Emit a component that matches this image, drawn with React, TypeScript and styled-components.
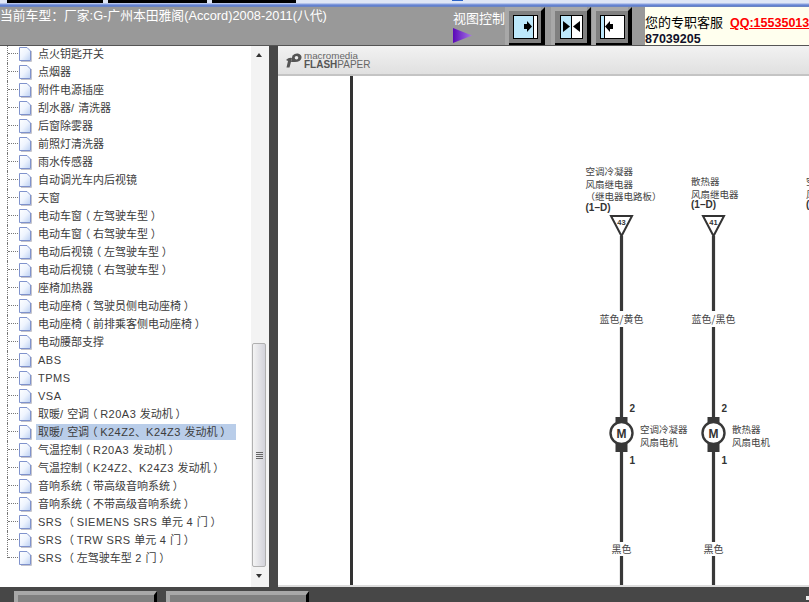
import styled, { createGlobalStyle } from "styled-components";

const GlobalStyle = createGlobalStyle`
  html, body {
    margin: 0;
    padding: 0;
    overflow: hidden;
  }
  body {
    font-family: "Liberation Sans", "Noto Sans CJK SC", sans-serif;
  }
`;

const Page = styled.div`
  width: 809px;
  height: 602px;
  display: flex;
  flex-direction: column;
  background: #474747;
  overflow: hidden;
`;

const TopStrip = styled.div`
  height: 7px;
  flex: none;
  display: flex;
  align-items: flex-start;
  padding-left: 7px;
  background: linear-gradient(#dfe6f6 0 3px, #8ea4e0 4px, #5577cc 6px, #7f8fb8 7px);
`;

const TopSegment = styled.div<{ $w: number }>`
  width: ${(p) => p.$w}px;
  height: 3px;
  margin-right: 5px;
  background: #000;
  flex: none;
`;

const TopTab = styled.div`
  width: 11px;
  height: 1px;
  margin-left: 151px;
  background: #2a62c8;
  flex: none;
`;

const Header = styled.div`
  height: 39px;
  flex: none;
  display: flex;
  background: #999;
  border-bottom: 1px solid #555;
  box-sizing: border-box;
`;

const CarTitle = styled.div`
  width: 453px;
  flex: none;
  padding-top: 1px;
  font-size: 12.8px;
  line-height: 16px;
  color: #fff;
  white-space: nowrap;
`;

const ViewControl = styled.div`
  width: 52px;
  flex: none;
  display: flex;
  flex-direction: column;
  font-size: 13px;
  line-height: 16px;
  color: #fff;
  padding-top: 4px;
  white-space: nowrap;
`;

const Arrow = styled.svg`
  margin-top: 1px;
  width: 19px;
  height: 15px;
`;

const ViewButtons = styled.div`
  width: 140px;
  flex: none;
  display: flex;
`;

const ViewButton = styled.div<{ $after: number }>`
  width: 40px;
  height: 38px;
  flex: none;
  margin-right: ${(p) => p.$after}px;
`;

const Service = styled.div`
  flex: 1;
  background: #ffffee;
  color: #000;
  font-size: 13px;
  line-height: 16px;
  padding-top: 8px;
  white-space: nowrap;
  overflow: hidden;
`;

const QQ = styled.span`
  margin-left: 7px;
  font-size: 12.5px;
  color: #f00;
  font-weight: bold;
  text-decoration: underline;
`;

const Phone = styled.div`
  font-size: 12.5px;
  line-height: 11px;
  font-weight: bold;
  color: #10102a;
  margin-top: 3px;
`;

const Body = styled.div`
  flex: 1;
  display: flex;
  min-height: 0;
`;

const Sidebar = styled.div`
  width: 269px;
  height: 541px;
  flex: none;
  display: flex;
  background: #fff;
  overflow: hidden;
`;

const Tree = styled.div`
  width: 251px;
  flex: none;
  overflow: hidden;
`;

const TreeList = styled.div`
  margin-top: -1px;
`;

const TreeRow = styled.div`
  height: 18px;
  display: flex;
  align-items: center;
  padding-left: 7px;
`;

const TreeGuide = styled.div<{ $last: boolean }>`
  width: 11px;
  height: ${(p) => (p.$last ? "9px" : "18px")};
  align-self: flex-start;
  border-left: 1px dotted #777;
  position: relative;
  flex: none;
  &::after {
    content: "";
    position: absolute;
    left: 0;
    top: 8px;
    width: 10px;
    border-top: 1px dotted #777;
  }
`;

const DocIcon = styled.svg`
  width: 13px;
  height: 15px;
  flex: none;
`;

const TreeLabel = styled.span<{ $active: boolean }>`
  margin-left: 4px;
  padding: 0 7px 0 2px;
  height: 16px;
  line-height: 16px;
  font-size: 11px;
  white-space: pre;
  color: #3c3c3c;
  background: ${(p) => (p.$active ? "#b9cde9" : "transparent")};
`;

const Latin = styled.span`
  letter-spacing: 0.5px;
`;

// fullwidth bracket set in the middle of its cell
const Bracket = styled.span`
  display: inline-block;
  width: 11px;
  text-align: center;
  font-feature-settings: "halt";
`;

const ScrollTrack = styled.div`
  width: 18px;
  flex: none;
  background: #f3f3f3;
  display: flex;
  flex-direction: column;
`;

const ScrollArrow = styled.div<{ $up: boolean }>`
  height: 18px;
  flex: none;
  display: flex;
  align-items: center;
  justify-content: center;
  padding-right: 2px;
  &::before {
    content: "";
    border-left: 3px solid transparent;
    border-right: 3px solid transparent;
    ${(p) =>
      p.$up ? "border-bottom: 4px solid #333;" : "border-top: 4px solid #333;"}
  }
`;

const ScrollSpace = styled.div`
  height: 279px;
  flex: none;
`;

const ScrollThumb = styled.div`
  height: 224px;
  flex: none;
  margin-left: 1px;
  width: 14px;
  box-sizing: border-box;
  border: 1px solid #b0b0b0;
  border-radius: 2px;
  background: linear-gradient(to right, #f4f4f4, #d2d2da);
  display: flex;
  align-items: center;
  justify-content: center;
`;

const Grip = styled.div`
  width: 7px;
  height: 7px;
  background: repeating-linear-gradient(#666 0 1px, transparent 1px 2px);
`;

const Divider = styled.div`
  width: 9px;
  flex: none;
`;

const Viewer = styled.div`
  width: 531px;
  height: 541px;
  flex: none;
  display: flex;
  flex-direction: column;
  background: #fff;
  border-bottom: 2px solid #ddd;
  box-sizing: border-box;
`;

const ViewerBar = styled.div`
  height: 30px;
  flex: none;
  display: flex;
  align-items: center;
  padding-left: 8px;
  background: linear-gradient(#f2f2f2, #e0e0e0);
  border-bottom: 2px solid #c4c4c4;
  box-sizing: border-box;
`;

const FlashLogo = styled.svg`
  width: 16px;
  height: 15px;
  flex: none;
`;

const FlashText = styled.div`
  margin-left: 2px;
  color: #666;
  font-size: 9.8px;
  line-height: 9px;
`;

const FlashStrong = styled.div`
  font-size: 10px;
  line-height: 9px;
  b {
    color: #555;
  }
`;

const Sheet = styled.div`
  flex: 1;
  position: relative;
  overflow: hidden;
`;

const Diagram = styled.svg`
  position: absolute;
  inset: 0;
  width: 100%;
  height: 100%;
  font-family: "Noto Sans CJK SC", sans-serif;
`;

const Footer = styled.div`
  height: 15px;
  flex: none;
  display: flex;
  gap: 9px;
  padding: 4px 0 0 14px;
  box-sizing: border-box;
  position: relative;
  overflow: hidden;
`;

const FooterButton = styled.div`
  width: 143px;
  height: 20px;
  box-sizing: border-box;
  background: #808080;
  border-top: 4px solid #a8a8a8;
  border-left: 4px solid #a8a8a8;
  border-right: 3px solid #000;
`;

const CursorMark = styled.div`
  position: absolute;
  right: 0;
  top: 9px;
  width: 3px;
  height: 4px;
  background: #eee;
`;

const items = [
  "点火钥匙开关",
  "点烟器",
  "附件电源插座",
  "刮水器/ 清洗器",
  "后窗除雾器",
  "前照灯清洗器",
  "雨水传感器",
  "自动调光车内后视镜",
  "天窗",
  "电动车窗（左驾驶车型）",
  "电动车窗（右驾驶车型）",
  "电动后视镜（左驾驶车型）",
  "电动后视镜（右驾驶车型）",
  "座椅加热器",
  "电动座椅（驾驶员侧电动座椅）",
  "电动座椅（前排乘客侧电动座椅）",
  "电动腰部支撑",
  "ABS",
  "TPMS",
  "VSA",
  "取暖/ 空调（R20A3 发动机）",
  "取暖/ 空调（K24Z2、K24Z3 发动机）",
  "气温控制（R20A3 发动机）",
  "气温控制（K24Z2、K24Z3 发动机）",
  "音响系统（带高级音响系统）",
  "音响系统（不带高级音响系统）",
  "SRS （SIEMENS SRS 单元 4 门）",
  "SRS （TRW SRS 单元 4 门）",
  "SRS （左驾驶车型 2 门）",
];

function labelParts(text: string) {
  return text.split(/([（）]|[\x20-\x7e]+)/).map((part, i) => {
    if (part === "（" || part === "）") return <Bracket key={i}>{part}</Bracket>;
    if (/^[\x20-\x7e]+$/.test(part)) return <Latin key={i}>{part}</Latin>;
    return part;
  });
}

function Doc() {
  return (
    <DocIcon viewBox="0 0 13 15">
      <defs>
        <linearGradient id="docFill" x1="0" y1="0" x2="1" y2="1">
          <stop offset="0" stopColor="#ffffff" />
          <stop offset="0.5" stopColor="#eef4fe" />
          <stop offset="1" stopColor="#bcd0f2" />
        </linearGradient>
      </defs>
      <path d="M2 14.500H12.500V4" fill="none" stroke="#c4c4cc" />
      <path d="M.5.5H8L11.500 4V13.500H.5Z" fill="url(#docFill)" stroke="#7f92cc" />
    </DocIcon>
  );
}

// kind: 0 = pane on the left, 1 = both, 2 = pane on the right
function PaneButton({ kind, after }: { kind: number; after: number }) {
  const left = kind === 1 ? 9 : 8;
  return (
    <ViewButton $after={after}>
      <svg width="40" height="38" viewBox="0 0 40 38">
        <path d="M0 0H36V38H0Z" fill="#a8a8a8" />
        <rect x="4" y="4" width="32" height="32" fill="#808080" />
        <path d="M36 4L40 0V38H36ZM4 36H40V38H4Z" fill="#000" />
        <rect x={left + 0.5} y="8.500" width={kind === 1 ? 22 : 24} height="23" fill="#fff" stroke="#000" />
        {kind === 0 && (
          <>
            <rect x="9" y="9" width="19" height="22" fill="#bde8fb" />
            <path d="M28.500 9V31" stroke="#000" />
            <path d="M19 17H22V14L27 19.500L22 25V22H19Z" fill="#000" />
          </>
        )}
        {kind === 1 && (
          <>
            <rect x="10" y="9" width="10" height="22" fill="#bde8fb" />
            <path d="M20.500 9V31" stroke="#000" />
            <path d="M12 14L19 19.500L12 25Z" fill="#000" />
            <path d="M29 14L22 19.500L29 25Z" fill="#000" />
          </>
        )}
        {kind === 2 && (
          <>
            <rect x="9" y="9" width="3" height="22" fill="#bde8fb" />
            <path d="M12.500 9V31" stroke="#000" />
            <path d="M13 19.500L18 14V17H21V22H18V25Z" fill="#000" />
          </>
        )}
      </svg>
    </ViewButton>
  );
}

type WireProps = {
  x: number;
  labelX: number;
  labelY: number;
  lines: string[];
  num: string;
  colour: string;
  sub: string[];
};

// diagram coordinates are relative to the white sheet, which starts at (278, 76)
function Wire({ x, labelX, labelY, lines, num, colour, sub }: WireProps) {
  return (
    <g>
      {lines.map((t, i) => (
        <text key={t} x={labelX} y={labelY + i * 12.5} fontSize="9.5" fill="#444">
          {t}
        </text>
      ))}
      <text x={labelX} y={labelY + lines.length * 12.5 - 2} fontSize="10" fontWeight="bold" fill="#333" fontFamily="Liberation Sans">
        (1–D)
      </text>
      <path d={`M${x - 10.500} 140H${x + 10.500}L${x} 160Z`} fill="#fff" stroke="#333" strokeWidth="2" />
      <text x={x} y="149" fontSize="7.5" fontWeight="bold" textAnchor="middle" fill="#333" fontFamily="Liberation Sans">
        {num}
      </text>
      <path d={`M${x} 160V235M${x} 251V466M${x} 480V510`} stroke="#383838" strokeWidth="3.2" />
      <text x={x} y="247" fontSize="10" textAnchor="middle" fill="#444">
        {colour}
      </text>
      <text x={x + 8} y="336" fontSize="10" fontWeight="bold" fill="#333" fontFamily="Liberation Sans">
        2
      </text>
      <text x={x + 8} y="388" fontSize="10" fontWeight="bold" fill="#333" fontFamily="Liberation Sans">
        1
      </text>
      <rect x={x - 6} y="341" width="12" height="35" fill="#383838" />
      <circle cx={x} cy="357" r="11" fill="#fff" stroke="#383838" strokeWidth="2.4" />
      <text x={x} y="361.500" fontSize="12" fontWeight="bold" textAnchor="middle" fill="#333" fontFamily="Liberation Sans">
        M
      </text>
      {sub.map((t, i) => (
        <text key={t} x={x + 18.500} y={357 + i * 12.5} fontSize="9.5" fill="#444">
          {t}
        </text>
      ))}
      <text x={x} y="477" fontSize="10" textAnchor="middle" fill="#444">
        黑色
      </text>
    </g>
  );
}

export default function App() {
  return (
    <>
      <GlobalStyle />
      <Page>
        <TopStrip>
          <TopSegment $w={96} />
          <TopSegment $w={99} />
          <TopSegment $w={84} />
          <TopTab />
        </TopStrip>
        <Header>
          <CarTitle>当前车型：厂家:G-广州本田雅阁(Accord)2008-2011(八代)</CarTitle>
          <ViewControl>
            视图控制
            <Arrow viewBox="0 0 19 15">
              <defs>
                <linearGradient id="arrowFill" x1="0" y1="0" x2="1" y2="0">
                  <stop offset="0" stopColor="#5a08b8" />
                  <stop offset="1" stopColor="#a878e8" />
                </linearGradient>
              </defs>
              <path d="M0 0L19 7.500L0 15Z" fill="url(#arrowFill)" />
            </Arrow>
          </ViewControl>
          <ViewButtons>
            <PaneButton kind={0} after={6} />
            <PaneButton kind={1} after={1} />
            <PaneButton kind={2} after={0} />
          </ViewButtons>
          <Service>
            您的专职客服<QQ>QQ:15535013</QQ>
            <Phone>87039205</Phone>
          </Service>
        </Header>
        <Body>
          <Sidebar>
            <Tree>
              <TreeList>
                {items.map((t, i) => (
                  <TreeRow key={t}>
                    <TreeGuide $last={i === items.length - 1} />
                    <Doc />
                    <TreeLabel $active={i === 21}>{labelParts(t)}</TreeLabel>
                  </TreeRow>
                ))}
              </TreeList>
            </Tree>
            <ScrollTrack>
              <ScrollArrow $up />
              <ScrollSpace />
              <ScrollThumb>
                <Grip />
              </ScrollThumb>
              <ScrollArrow $up={false} />
            </ScrollTrack>
          </Sidebar>
          <Divider />
          <Viewer>
            <ViewerBar>
              <FlashLogo viewBox="0 0 16 15">
                <path d="M0 7Q3 4 6 5L3.500 14.500H0.500L2 8Z" fill="#555" />
                <path d="M5 9L6.500 2.500Q9 0 12 0.500Q16 1.500 15.500 5Q14.500 9 9 9Z" fill="#555" />
                <circle cx="10.500" cy="4.800" r="1.800" fill="#eee" />
              </FlashLogo>
              <FlashText>
                macromedia
                <FlashStrong>
                  <b>FLASH</b>PAPER
                </FlashStrong>
              </FlashText>
            </ViewerBar>
            <Sheet>
              <Diagram viewBox="0 0 531 509">
                <path d="M73.500 0V509" stroke="#333" strokeWidth="3" />
                <Wire
                  x={343.5}
                  labelX={307.5}
                  labelY={99}
                  lines={["空调冷凝器", "风扇继电器", "（继电器电路板）"]}
                  num="43"
                  colour="蓝色/黄色"
                  sub={["空调冷凝器", "风扇电机"]}
                />
                <Wire
                  x={435.5}
                  labelX={413}
                  labelY={109}
                  lines={["散热器", "风扇继电器"]}
                  num="41"
                  colour="蓝色/黑色"
                  sub={["散热器", "风扇电机"]}
                />
                <text x="528" y="109" fontSize="9.5" fill="#444">空调</text>
                <text x="528" y="121.500" fontSize="9.5" fill="#444">风扇</text>
                <text x="528" y="132" fontSize="10" fontWeight="bold" fill="#333" fontFamily="Liberation Sans">(1–D)</text>
              </Diagram>
            </Sheet>
          </Viewer>
        </Body>
        <Footer>
          <FooterButton />
          <FooterButton />
          <CursorMark />
        </Footer>
      </Page>
    </>
  );
}
